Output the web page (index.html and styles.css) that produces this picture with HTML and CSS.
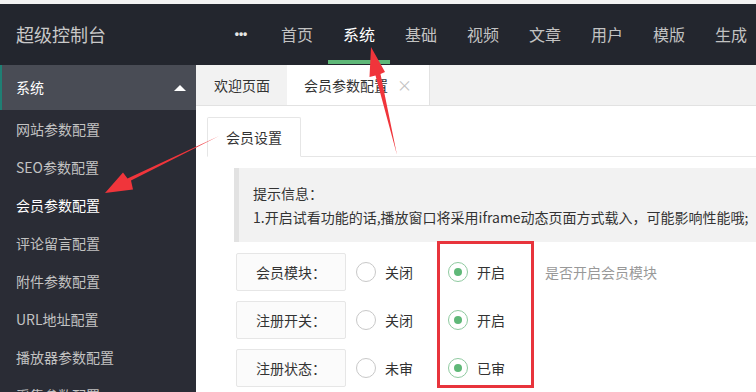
FILE: index.html
```html
<!DOCTYPE html>
<html lang="zh-CN">
<head>
<meta charset="utf-8">
<title>超级控制台</title>
<link rel="stylesheet" href="styles.css">
</head>
<body>
<div class="topstrip"></div>
<header class="header">
  <div class="logo">超级控制台</div>
  <nav class="nav">
    <span class="nav-more">•••</span>
    <span class="nav-item">首页</span>
    <span class="nav-item active">系统</span>
    <span class="nav-item">基础</span>
    <span class="nav-item">视频</span>
    <span class="nav-item">文章</span>
    <span class="nav-item">用户</span>
    <span class="nav-item">模版</span>
    <span class="nav-item">生成</span>
  </nav>
</header>
<div class="main">
  <aside class="side">
    <div class="side-group">系统<span class="tri"></span></div>
    <div class="side-item">网站参数配置</div>
    <div class="side-item">SEO参数配置</div>
    <div class="side-item active">会员参数配置</div>
    <div class="side-item">评论留言配置</div>
    <div class="side-item">附件参数配置</div>
    <div class="side-item">URL地址配置</div>
    <div class="side-item">播放器参数配置</div>
    <div class="side-item">采集参数配置</div>
  </aside>
  <section class="content">
    <div class="tabbar">
      <div class="tab">欢迎页面</div>
      <div class="tab active">会员参数配置<span class="close">×</span></div>
    </div>
    <div class="page">
      <div class="subtabs"><div class="subtab">会员设置</div></div>
      <div class="body">
        <div class="tip">
          <p>提示信息：</p>
          <p>1.开启试看功能的话,播放窗口将采用iframe动态页面方式载入，可能影响性能哦;</p>
        </div>
        <div class="form">
          <div class="row">
            <div class="label">会员模块：</div>
            <div class="radio"><span class="ring"></span>关闭</div>
            <div class="radio checked"><span class="ring"></span>开启</div>
            <div class="hint">是否开启会员模块</div>
          </div>
          <div class="row">
            <div class="label">注册开关：</div>
            <div class="radio"><span class="ring"></span>关闭</div>
            <div class="radio checked"><span class="ring"></span>开启</div>
          </div>
          <div class="row">
            <div class="label">注册状态：</div>
            <div class="radio"><span class="ring"></span>未审</div>
            <div class="radio checked"><span class="ring"></span>已审</div>
          </div>
        </div>
      </div>
    </div>
  </section>
</div>
<div class="redbox"></div>
<svg class="annot" width="756" height="392" viewBox="0 0 756 392">
  <polygon fill="#f0353b" points="397,155 380.5,74 385,72 371,47 369.5,77 375.5,75.5"/>
  <polygon fill="#f0353b" points="219,136 131,180.5 133,189.5 105,193 123,172.5 127.5,178.5"/>
</svg>
</body>
</html>
```

FILE: styles.css
```css
* { box-sizing: border-box; margin: 0; padding: 0; }
html, body { width: 756px; height: 392px; overflow: hidden; }
body {
  font-family: "Noto Sans CJK SC", "Liberation Sans", sans-serif;
  font-size: 14px;
  color: #333;
  background: #fff;
  position: relative;
}
.topstrip { height: 4px; background: #f2f2f2; }
.header {
  height: 61px;
  background: #23262e;
  display: flex;
  align-items: stretch;
  overflow: hidden;
}
.logo {
  width: 224px;
  flex: none;
  padding-left: 16px;
  color: #c9c9c9;
  font-size: 18px;
  line-height: 61px;
}
.nav { display: flex; white-space: nowrap; flex: none; }
.nav-more {
  width: 42px;
  flex: none;
  text-align: center;
  color: #e6e6e6;
  font-family: "Liberation Sans", sans-serif;
  font-size: 12px;
  font-weight: bold;
  line-height: 60px;
  padding-right: 8px;
}
.nav-item {
  width: 62px;
  flex: none;
  text-align: center;
  color: #c2c2c2;
  font-size: 16px;
  line-height: 61px;
  position: relative;
}
.nav-item.active { color: #fff; }
.nav-item.active::after {
  content: "";
  position: absolute;
  left: 0; right: 0; bottom: 1px;
  height: 4px;
  background: #5fb878;
}
.main { display: flex; height: 327px; overflow: hidden; }
.side {
  width: 196px;
  flex: none;
  background: #2a2c35;
  overflow: hidden;
}
.side-group {
  height: 45px;
  line-height: 45px;
  color: #fff;
  background: #494c55;
  border-left: 2px solid #1f7f74;
  padding-left: 14px;
  display: flex;
  align-items: center;
  justify-content: space-between;
  padding-right: 10px;
}
.tri {
  width: 0; height: 0;
  border-left: 6px solid transparent;
  border-right: 6px solid transparent;
  border-bottom: 6px solid #fff;
}
.side-item {
  height: 38px;
  line-height: 38px;
  padding-left: 16px;
  color: #c2c2c2;
}
.side-item.active { color: #fff; }
.content { flex: 1; background: #fff; overflow: hidden; }
.tabbar {
  height: 41px;
  background: #f2f2f2;
  border-bottom: 1px solid #e2e2e2;
  display: flex;
}
.tab {
  padding: 0 17px 0 18px;
  line-height: 40px;
  color: #333;
  white-space: nowrap;
}
.tab.active {
  background: #fff;
  border-right: 1px solid #e2e2e2;
  padding: 0 17px 0 17px;
}
.close {
  color: #c2c2c2;
  font-size: 15px;
  margin-left: 9px;
}
.page { padding: 11px 0 0 11px; }
.subtabs {
  border-bottom: 1px solid #e6e6e6;
  display: flex;
  height: 40px;
}
.subtab {
  width: 94px;
  height: 40px;
  line-height: 38px;
  text-align: center;
  border: 1px solid #e6e6e6;
  border-bottom-color: #fff;
  background: #fff;
  border-radius: 2px 2px 0 0;
}
.body { padding: 11px 0 0 27px; }
.tip {
  width: 600px;
  background: #f2f2f2;
  border-left: 5px solid #e2e2e2;
  padding: 13px 14px;
  line-height: 24px;
  white-space: nowrap;
}
.form { padding: 11px 0 0 2px; }
.row {
  display: flex;
  align-items: center;
  height: 38px;
  margin-bottom: 10px;
}
.label {
  width: 110px;
  height: 38px;
  line-height: 36px;
  text-align: center;
  background: #fbfbfb;
  border: 1px solid #e6e6e6;
  border-radius: 2px;
}
.radio {
  display: flex;
  align-items: center;
  margin-left: 10px;
  margin-right: 25px;
  line-height: 20px;
}
.ring {
  width: 20px;
  height: 20px;
  border: 1.5px solid #c8c8c8;
  border-radius: 50%;
  margin-right: 9px;
  position: relative;
}
.radio.checked .ring { border-color: #8fcaa0; }
.radio.checked .ring::after {
  content: "";
  position: absolute;
  left: 4.5px; top: 4.5px;
  width: 8px; height: 8px;
  border-radius: 50%;
  background: #5fb878;
}
.hint { color: #999; margin-left: 15px; }
.redbox {
  position: absolute;
  left: 437px;
  top: 241px;
  width: 97px;
  height: 147px;
  border: 3px solid #e8343c;
}
.annot { position: absolute; left: 0; top: 0; pointer-events: none; }
```
